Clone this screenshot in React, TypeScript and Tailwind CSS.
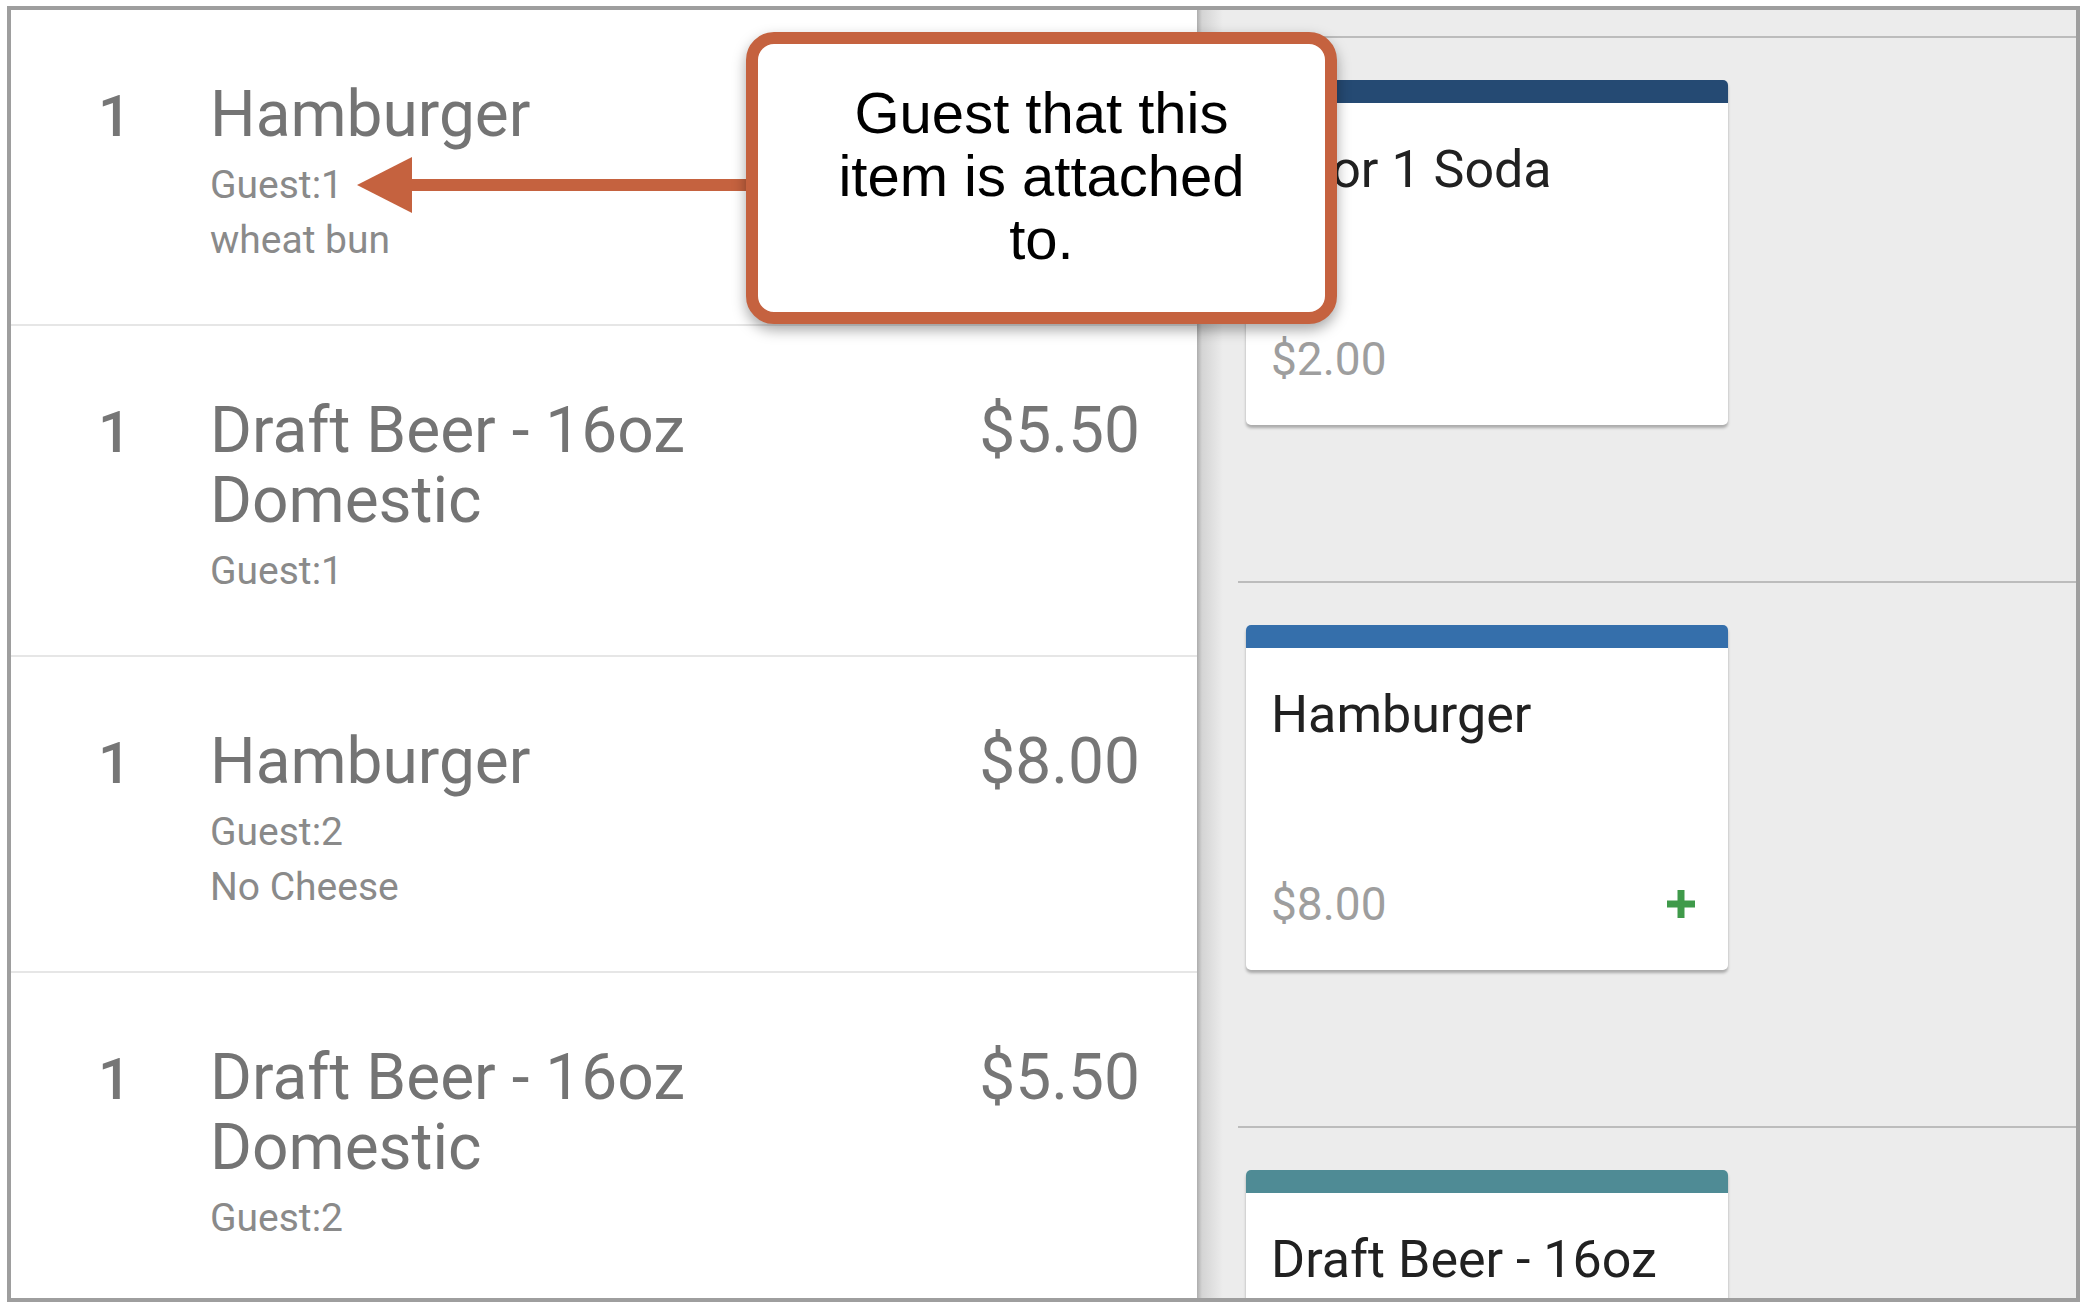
type OrderLine = {
  qty: number;
  name: string;
  price: string;
  notes: string[];
};

type MenuItem = {
  name: string;
  price: string;
  bar: string;
  showAdd?: boolean;
};

const orderLines: OrderLine[] = [
  { qty: 1, name: "Hamburger", price: "$8.00", notes: ["Guest:1", "wheat bun"] },
  { qty: 1, name: "Draft Beer - 16oz Domestic", price: "$5.50", notes: ["Guest:1"] },
  { qty: 1, name: "Hamburger", price: "$8.00", notes: ["Guest:2", "No Cheese"] },
  { qty: 1, name: "Draft Beer - 16oz Domestic", price: "$5.50", notes: ["Guest:2"] },
];

const menuItems: MenuItem[] = [
  { name: "2 for 1 Soda", price: "$2.00", bar: "bg-[#254a73]" },
  { name: "Hamburger", price: "$8.00", bar: "bg-[#356fab]", showAdd: true },
  { name: "Draft Beer - 16oz Domestic", price: "$5.50", bar: "bg-[#4f8b95]", showAdd: true },
];

function AddIcon() {
  return (
    <svg width="30" height="28" viewBox="0 0 30 28" className="shrink-0">
      <path d="M15 0v28M1 14h28" stroke="#3f9a4a" strokeWidth="7" />
    </svg>
  );
}

function MenuCard({ item }: { item: MenuItem }) {
  return (
    <div className="w-[482px] h-[345px] bg-white rounded-[5px] shadow-[0_3px_3px_rgba(0,0,0,0.28)] overflow-hidden flex flex-col">
      <div className={`h-[23px] shrink-0 ${item.bar}`} />
      <div className="px-[25px] pt-[37px] text-[52px] leading-[60px] text-[#212121]">{item.name}</div>
      <div className="mt-auto flex items-center justify-between pl-[25px] pr-[32px] pb-[39px]">
        <span className="text-[46px] leading-[54px] text-[#9e9e9e]">{item.price}</span>
        {item.showAdd && <AddIcon />}
      </div>
    </div>
  );
}

export default function App() {
  return (
    <div className="w-[2082px] h-[1306px] bg-white pt-[6px] pl-[7px] font-['Roboto',sans-serif]">
      <div className="relative flex w-[2073px] h-[1296px] border-4 border-[#9e9e9e] overflow-hidden">
        {/* Order list */}
        <div className="w-[1186px] shrink-0 bg-white">
          {orderLines.map((line, i) => (
            <div
              key={i}
              className="flex items-baseline pl-[87px] pr-[57px] pt-[70px] pb-[56px] border-b-2 border-[#e6e6e6]"
            >
              <div className="w-[112px] shrink-0 text-[58px] leading-[70px] font-medium text-[#767676]">
                {line.qty}
              </div>
              <div className="w-[600px] shrink-0">
                <div className="text-[64px] leading-[70px] text-[#747474]">{line.name}</div>
                <div className="mt-2 text-[39px] leading-[55px] text-[#8a8a8a]">
                  {line.notes.map((n) => (
                    <div key={n}>{n}</div>
                  ))}
                </div>
              </div>
              <div className="flex-1 text-right text-[64px] leading-[70px] text-[#767676]">{line.price}</div>
            </div>
          ))}
        </div>

        {/* Menu items */}
        <div className="flex-1 bg-[linear-gradient(to_right,#adadad,#d4d4d4_5px,#ececec_26px)]">
          <div className="h-[28px] border-b-2 border-[#bcbcbc]" />
          {menuItems.map((item) => (
            <div key={item.name} className="ml-[41px] pl-[8px] pt-[42px] pb-[156px] border-b-2 border-[#bcbcbc]">
              <MenuCard item={item} />
            </div>
          ))}
        </div>

        {/* Callout */}
        <svg width="389" height="56" viewBox="0 0 389 56" className="absolute left-[346px] top-[147px]">
          <polygon points="0,28 55,0 55,56" fill="#c5623f" />
          <rect x="54" y="22" width="335" height="12" fill="#c5623f" />
        </svg>
        <div className="absolute left-[735px] top-[22px] w-[591px] h-[292px] pb-[6px] rounded-[28px] border-[12px] border-[#c5623f] bg-white shadow-[0_6px_14px_rgba(0,0,0,0.35)] flex items-center justify-center text-center font-['Liberation_Sans',Arial,sans-serif] text-[58px] leading-[63px] text-black">
          <p>
            Guest that this
            <br />
            item is attached
            <br />
            to.
          </p>
        </div>
      </div>
    </div>
  );
}
